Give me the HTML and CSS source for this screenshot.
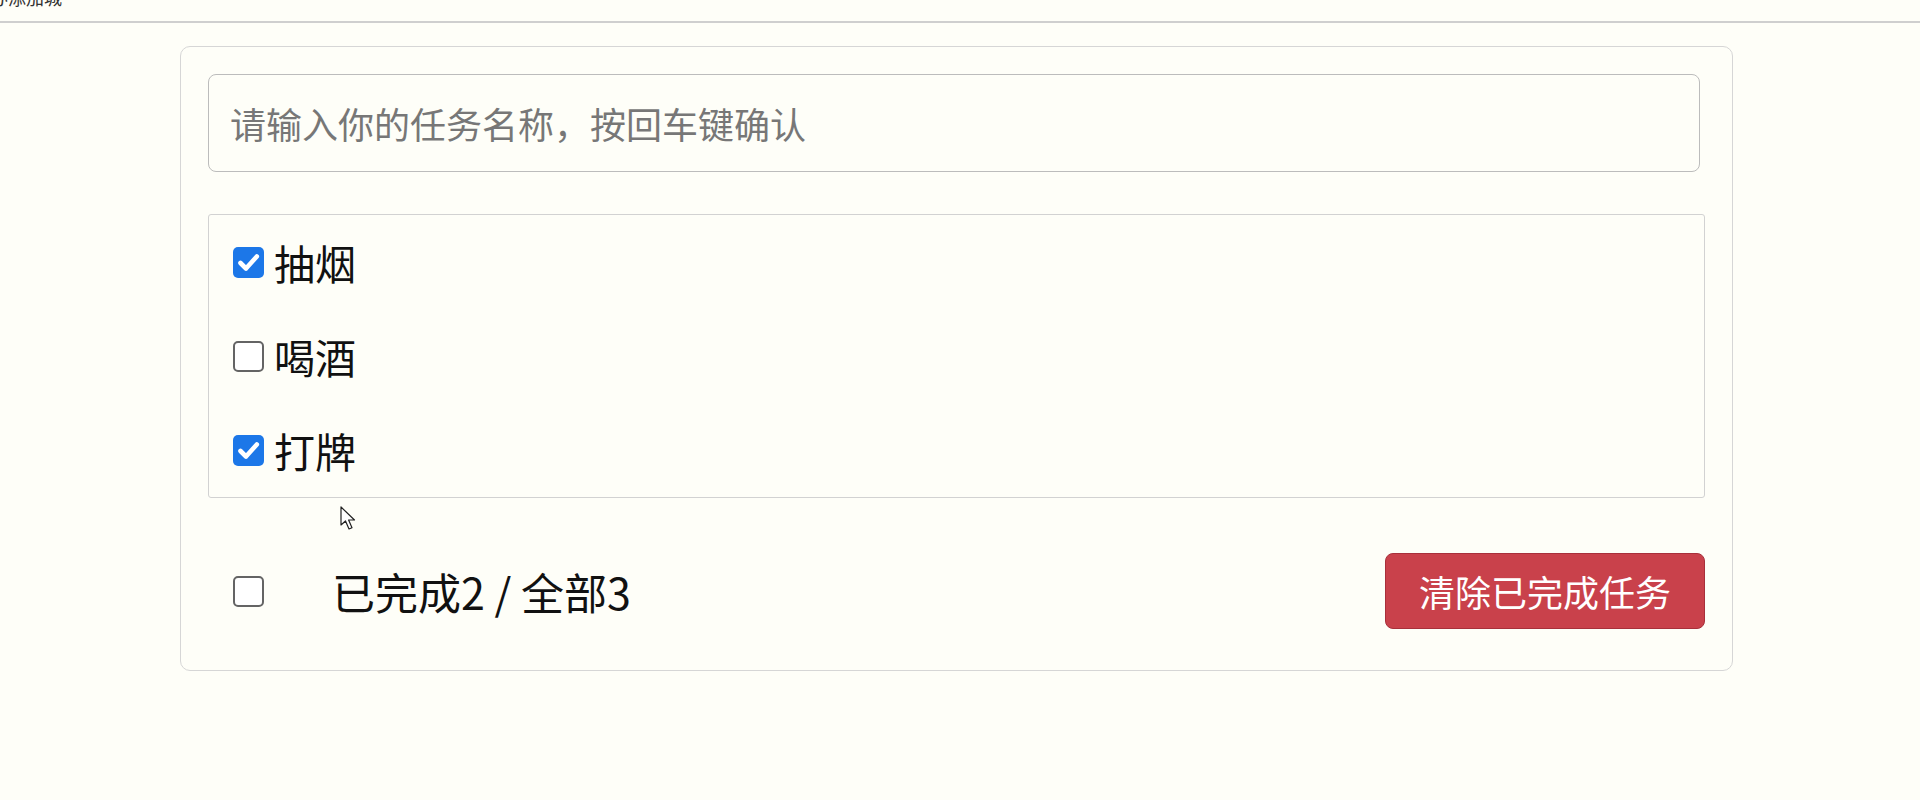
FILE: index.html
```html
<!DOCTYPE html>
<html lang="zh-CN">
<head>
<meta charset="utf-8">
<title>TodoList</title>
<link rel="stylesheet" href="styles.css">
</head>
<body>
<header class="topbar"><span class="topbar-text">办添加城</span></header>
<div class="page">
  <div class="card">
    <input class="todo-input" type="text" placeholder="请输入你的任务名称，按回车键确认">
    <ul class="todo-list">
      <li class="todo-item"><span class="cb cb-on"><svg viewBox="0 0 31 31" width="31" height="31"><path d="M7.5 16 L13 21.5 L23.8 9.5" fill="none" stroke="#fff" stroke-width="4.6" stroke-linecap="round" stroke-linejoin="round"/></svg></span><span class="item-text">抽烟</span></li>
      <li class="todo-item"><span class="cb"></span><span class="item-text">喝酒</span></li>
      <li class="todo-item"><span class="cb cb-on"><svg viewBox="0 0 31 31" width="31" height="31"><path d="M7.5 16 L13 21.5 L23.8 9.5" fill="none" stroke="#fff" stroke-width="4.6" stroke-linecap="round" stroke-linejoin="round"/></svg></span><span class="item-text">打牌</span></li>
    </ul>
    <div class="footer">
      <span class="cb footer-cb"></span>
      <span class="footer-text">已完成2 / 全部3</span>
      <button class="btn-danger" type="button">清除已完成任务</button>
    </div>
    <svg class="cursor" viewBox="0 0 18 26" width="18" height="26"><path d="M1 1 L1 19 L5.5 15 L9 23 L12 21.7 L8.6 14 L14.5 14 Z" fill="#fff" stroke="#222" stroke-width="1.2" stroke-linejoin="round"/></svg>
  </div>
</div>
</body>
</html>
```
FILE: styles.css
```css
* { box-sizing: border-box; }
html, body { margin: 0; padding: 0; }
body {
  background: #fefef8;
  font-family: "Noto Sans CJK SC", "Noto Sans", sans-serif;
  color: #111;
}
.topbar {
  height: 23px;
  border-bottom: 2px solid #cfcfcf;
  overflow: hidden;
}
.topbar-text {
  display: block;
  font-size: 18px;
  line-height: 18px;
  margin-top: -12px;
  margin-left: -10px;
  color: #333;
}
.page {
  padding: 23px 0 0 180px;
}
.card {
  position: relative;
  width: 1553px;
  border: 1px solid #d6d6d6;
  border-radius: 10px;
  padding: 27px;
}
.todo-input {
  display: block;
  width: calc(100% - 5px);
  height: 98px;
  border: 1px solid #bcbcbc;
  border-radius: 8px;
  background: transparent;
  padding: 0 21px;
  font-family: inherit;
  font-size: 36px;
  color: #222;
  outline: none;
}
.todo-input::placeholder { color: #777; }
.todo-list {
  list-style: none;
  margin: 42px 0 0;
  padding: 0;
  border: 1px solid #d2d2d2;
  border-radius: 3px;
}
.todo-item {
  height: 94px;
  display: flex;
  align-items: center;
  padding-left: 24px;
}
.cb {
  width: 31px;
  height: 31px;
  flex: none;
  border: 2px solid #646464;
  border-radius: 5px;
  background: #fff;
  display: inline-flex;
}
.cb-on {
  border: none;
  background: #1c77e8;
}
.item-text {
  margin-left: 10px;
  font-size: 41px;
  line-height: 1;
  color: #111;
}
.footer {
  margin-top: 55px;
  margin-bottom: 14px;
  height: 76px;
  display: flex;
  align-items: center;
}
.footer-cb { margin-left: 25px; }
.footer-text {
  margin-left: 68px;
  font-size: 43px;
  line-height: 1;
  color: #111;
}
.btn-danger {
  margin-left: auto;
  width: 320px;
  height: 76px;
  border: 1px solid #a8303b;
  border-radius: 8px;
  background: #c9414b;
  color: #fff;
  font-family: inherit;
  font-size: 36px;
  padding: 0;
}
.cursor {
  position: absolute;
  left: 159px;
  top: 459px;
}
```
